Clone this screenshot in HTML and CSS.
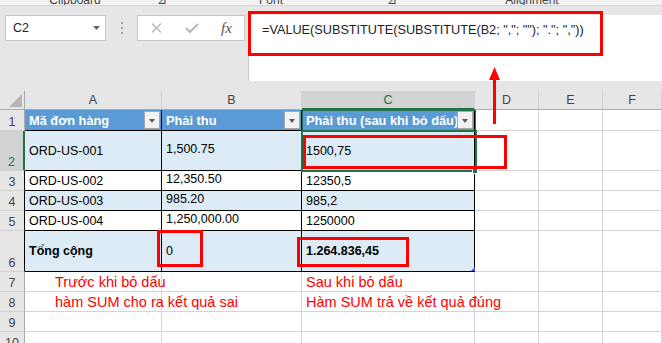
FILE: index.html
```html
<!DOCTYPE html>
<html lang="vi">
<head>
  <meta charset="UTF-8">
  <title>Bỏ dấu phân cách với SUBSTITUTE</title>
  <link rel="stylesheet" href="styles.css">
</head>
<body>
  <!-- Phần cuối của ribbon -->
  <div class="ribbon-tail">
    <span class="grp grp-clip">Clipboard</span>
    <span class="grp grp-l1">⊿</span>
    <span class="grp grp-font">Font</span>
    <span class="grp grp-l2">⊿</span>
    <span class="grp grp-align">Alignment</span>
  </div>

  <!-- Thanh công thức -->
  <div class="formula-area">
    <div class="name-box">
      <span>C2</span>
      <svg width="7" height="4" viewBox="0 0 7 4"><polygon points="0,0 7,0 3.5,4" fill="#666"/></svg>
    </div>
    <div class="grip">
      <svg width="2" height="12" viewBox="0 0 2 12"><rect y="0" width="2" height="2" fill="#a0a0a0"/><rect y="5" width="2" height="2" fill="#a0a0a0"/><rect y="10" width="2" height="2" fill="#a0a0a0"/></svg>
    </div>
    <div class="fx-buttons">
      <svg class="btn-x" width="11" height="10" viewBox="0 0 11 10"><path d="M1 0.5 L10 9.5 M10 0.5 L1 9.5" stroke="#b5b5b5" stroke-width="1.4" fill="none"/></svg>
      <svg class="btn-ok" width="14" height="10" viewBox="0 0 14 10"><path d="M1 5 L5 9 L13 1" stroke="#b5b5b5" stroke-width="2" fill="none"/></svg>
      <span class="btn-fx">fx</span>
    </div>
    <div class="formula-bar">=VALUE(SUBSTITUTE(SUBSTITUTE(B2; ","; ""); "."; ","))</div>
  </div>

  <!-- Bảng tính -->
  <div class="sheet">
    <div class="hd corner"><svg width="13" height="13" viewBox="0 0 13 13"><polygon points="13,0 13,13 0,13" fill="#b7b7b7"/></svg></div>
    <div class="hd col">A</div>
    <div class="hd col">B</div>
    <div class="hd col col-sel">C</div>
    <div class="hd col">D</div>
    <div class="hd col">E</div>
    <div class="hd col">F</div>

    <div class="hd row">1</div>
    <div class="c th">Mã đơn hàng<span class="filter"></span></div>
    <div class="c th">Phải thu<span class="filter"></span></div>
    <div class="c th th-last">Phải thu (sau khi bỏ dấu)<span class="filter"></span></div>
    <div class="c"></div>
    <div class="c"></div>
    <div class="c"></div>

    <div class="hd row row-sel">2</div>
    <div class="c t band">ORD-US-001</div>
    <div class="c t band num-b">1,500.75</div>
    <div class="c t band">1500,75</div>
    <div class="c"></div>
    <div class="c"></div>
    <div class="c"></div>

    <div class="hd row row-tbl">3</div>
    <div class="c t">ORD-US-002</div>
    <div class="c t num-b">12,350.50</div>
    <div class="c t">12350,5</div>
    <div class="c"></div>
    <div class="c"></div>
    <div class="c"></div>

    <div class="hd row row-tbl">4</div>
    <div class="c t band">ORD-US-003</div>
    <div class="c t band num-b">985.20</div>
    <div class="c t band">985,2</div>
    <div class="c"></div>
    <div class="c"></div>
    <div class="c"></div>

    <div class="hd row row-tbl">5</div>
    <div class="c t">ORD-US-004</div>
    <div class="c t num-b">1,250,000.00</div>
    <div class="c t">1250000</div>
    <div class="c"></div>
    <div class="c"></div>
    <div class="c"></div>

    <div class="hd row row-tbl">6</div>
    <div class="c t band bold">Tổng cộng</div>
    <div class="c t band">0</div>
    <div class="c t band bold">1.264.836,45</div>
    <div class="c"></div>
    <div class="c"></div>
    <div class="c"></div>

    <div class="hd row">7</div>
    <div class="c note note-indent">Trước khi bỏ dấu</div>
    <div class="c"></div>
    <div class="c note">Sau khi bỏ dấu</div>
    <div class="c"></div>
    <div class="c"></div>
    <div class="c"></div>

    <div class="hd row">8</div>
    <div class="c note note-indent">hàm SUM cho ra kết quả sai</div>
    <div class="c"></div>
    <div class="c note">Hàm SUM trả về kết quả đúng</div>
    <div class="c"></div>
    <div class="c"></div>
    <div class="c"></div>

    <div class="hd row">9</div>
    <div class="c"></div>
    <div class="c"></div>
    <div class="c"></div>
    <div class="c"></div>
    <div class="c"></div>
    <div class="c"></div>

    <div class="hd row">10</div>
    <div class="c"></div>
    <div class="c"></div>
    <div class="c"></div>
    <div class="c"></div>
    <div class="c"></div>
    <div class="c"></div>
  </div>

  <!-- Vùng chọn và chú thích -->
  <div class="sel-head"></div>
  <div class="sel-cell"></div>
  <div class="fill-handle"></div>
  <div class="resize-handle"></div>

  <div class="red-box box-formula"></div>
  <div class="red-box box-c2"></div>
  <div class="red-box box-b6"></div>
  <div class="red-box box-c6"></div>
  <svg class="red-arrow" width="15" height="60" viewBox="0 0 15 60">
    <polygon points="7.5,2 2,15 13,15" fill="#ff0000"/>
    <rect x="6" y="14" width="3" height="45" fill="#ff0000"/>
  </svg>
</body>
</html>
```

FILE: styles.css
```css
body {
  margin: 0;
  width: 662px;
  height: 343px;
  overflow: hidden;
  position: relative;
  background: #fff;
  font-family: "Liberation Sans", Arial, sans-serif;
  color: #000;
}

/* ribbon */
.ribbon-tail {
  height: 5px;
  background: #f3f3f3;
  border-bottom: 1px solid #d5d5d5;
  display: flex;
  overflow: hidden;
  font-size: 12px;
  line-height: 14px;
  color: #444;
}
.grp {
  display: block;
  margin-top: -7px;
  text-align: center;
}
.grp-clip { width: 150px; }
.grp-l1 { width: 24px; }
.grp-font { width: 194px; }
.grp-l2 { width: 48px; }
.grp-align { width: 232px; }

/* formula bar */
.formula-area {
  height: 85px;
  box-sizing: border-box;
  background: #e6e6e6;
  padding: 9px 0 0 5px;
  display: flex;
  align-items: flex-start;
}
.name-box {
  width: 101px;
  height: 26px;
  box-sizing: border-box;
  background: #fff;
  border: 1px solid #c6c6c6;
  padding: 0 5px 0 7px;
  display: flex;
  align-items: center;
  justify-content: space-between;
  font-size: 12.5px;
  color: #222;
}
.grip {
  width: 31px;
  height: 26px;
  display: flex;
  align-items: center;
  justify-content: center;
}
.fx-buttons {
  width: 108px;
  height: 26px;
  box-sizing: border-box;
  background: #fff;
  border: 1px solid #c6c6c6;
  padding-left: 13px;
  display: flex;
  align-items: center;
}
.btn-ok { margin-left: 23px; }
.btn-fx {
  margin-left: 22px;
  font-family: "Liberation Serif", "Times New Roman", serif;
  font-style: italic;
  font-size: 15px;
  color: #555;
}
.formula-bar {
  flex: 1;
  height: 66px;
  box-sizing: border-box;
  margin-left: 3px;
  background: #fff;
  border-left: 1px solid #c6c6c6;
  padding: 8px 0 0 13px;
  font-size: 12.7px;
  color: #222;
  white-space: nowrap;
}

/* sheet grid */
.sheet {
  display: grid;
  grid-template-columns: 25px 137px 140px 173px 64px 64px 59px;
  grid-template-rows: 19px 21px 40px 20px 20px 20px 41px 20px 20px 20px 20px;
  font-size: 12.5px;
}
.sheet > div {
  box-sizing: border-box;
  white-space: nowrap;
}
.hd {
  background: #e6e6e6;
  color: #444;
  font-size: 12.5px;
  display: flex;
  justify-content: center;
}
.corner {
  align-items: flex-end;
  justify-content: flex-end;
  padding: 0 2px 2px 0;
  border-right: 1px solid #ababab;
  border-bottom: 1px solid #ababab;
}
.col {
  align-items: center;
  border-right: 1px solid #d0d0d0;
  border-bottom: 1px solid #ababab;
}
.col-sel {
  background: #d2d2d2;
  color: #217346;
  border-bottom: 2px solid #217346;
}
.row {
  align-items: flex-end;
  padding-bottom: 1px;
  border-right: 1px solid #ababab;
  border-bottom: 1px solid #d0d0d0;
}
.row-sel {
  background: #d2d2d2;
  color: #217346;
  border-right: 2px solid #217346;
}
.row-tbl {
  border-right: 1px solid #000;
}

.c {
  border-right: 1px solid #d4d4d4;
  border-bottom: 1px solid #d4d4d4;
  padding-left: 4px;
  display: flex;
  align-items: center;
}
.th {
  background: #5b9bd5;
  color: #fff;
  font-weight: bold;
  font-size: 12.8px;
  border-right: 1px solid #000;
  border-bottom: 1px solid #000;
  justify-content: space-between;
  padding-right: 1px;
  overflow: hidden;
}
.filter {
  flex: none;
  width: 16px;
  height: 18px;
  box-sizing: border-box;
  background: #f2f2f2 no-repeat center;
  border: 1px solid #a8a8a8;
  position: relative;
}
.filter::after {
  content: "";
  position: absolute;
  left: 4px;
  top: 7px;
  border-left: 3.5px solid transparent;
  border-right: 3.5px solid transparent;
  border-top: 4px solid #595959;
}
.th-last .filter { margin-left: -4px; }
.t {
  border-right: 1px solid #000;
  border-bottom: 1px solid #000;
}
.band { background: #ddebf7; }
.num-b { padding-bottom: 3px; }
.bold { font-weight: bold; }
.note {
  color: #ff0000;
  font-size: 14.5px;
  overflow: visible;
}
.note-indent { padding-left: 30px; }

/* selection & annotations */
.sel-head {
  position: absolute;
  left: 302px;
  top: 110px;
  width: 174px;
  height: 22px;
  box-sizing: border-box;
  border: 1px solid #217346;
}
.sel-cell {
  position: absolute;
  left: 301px;
  top: 130px;
  width: 176px;
  height: 42px;
  box-sizing: border-box;
  border: 2px solid #217346;
}
.fill-handle {
  position: absolute;
  left: 472px;
  top: 168px;
  width: 6px;
  height: 6px;
  box-sizing: border-box;
  background: #217346;
  border: 1px solid #fff;
}
.resize-handle {
  position: absolute;
  left: 471px;
  top: 267px;
  width: 0;
  height: 0;
  border-left: 4px solid transparent;
  border-bottom: 4px solid #3a5fcd;
}
.red-box {
  position: absolute;
  box-sizing: border-box;
  border: 3px solid #ff0000;
}
.box-formula { left: 248px; top: 11px; width: 355px; height: 45px; }
.box-c2 { left: 303px; top: 135px; width: 204px; height: 34px; }
.box-b6 { left: 157px; top: 230px; width: 46px; height: 37px; }
.box-c6 { left: 297px; top: 237px; width: 112px; height: 30px; }
.red-arrow {
  position: absolute;
  left: 487px;
  top: 65px;
}
```
